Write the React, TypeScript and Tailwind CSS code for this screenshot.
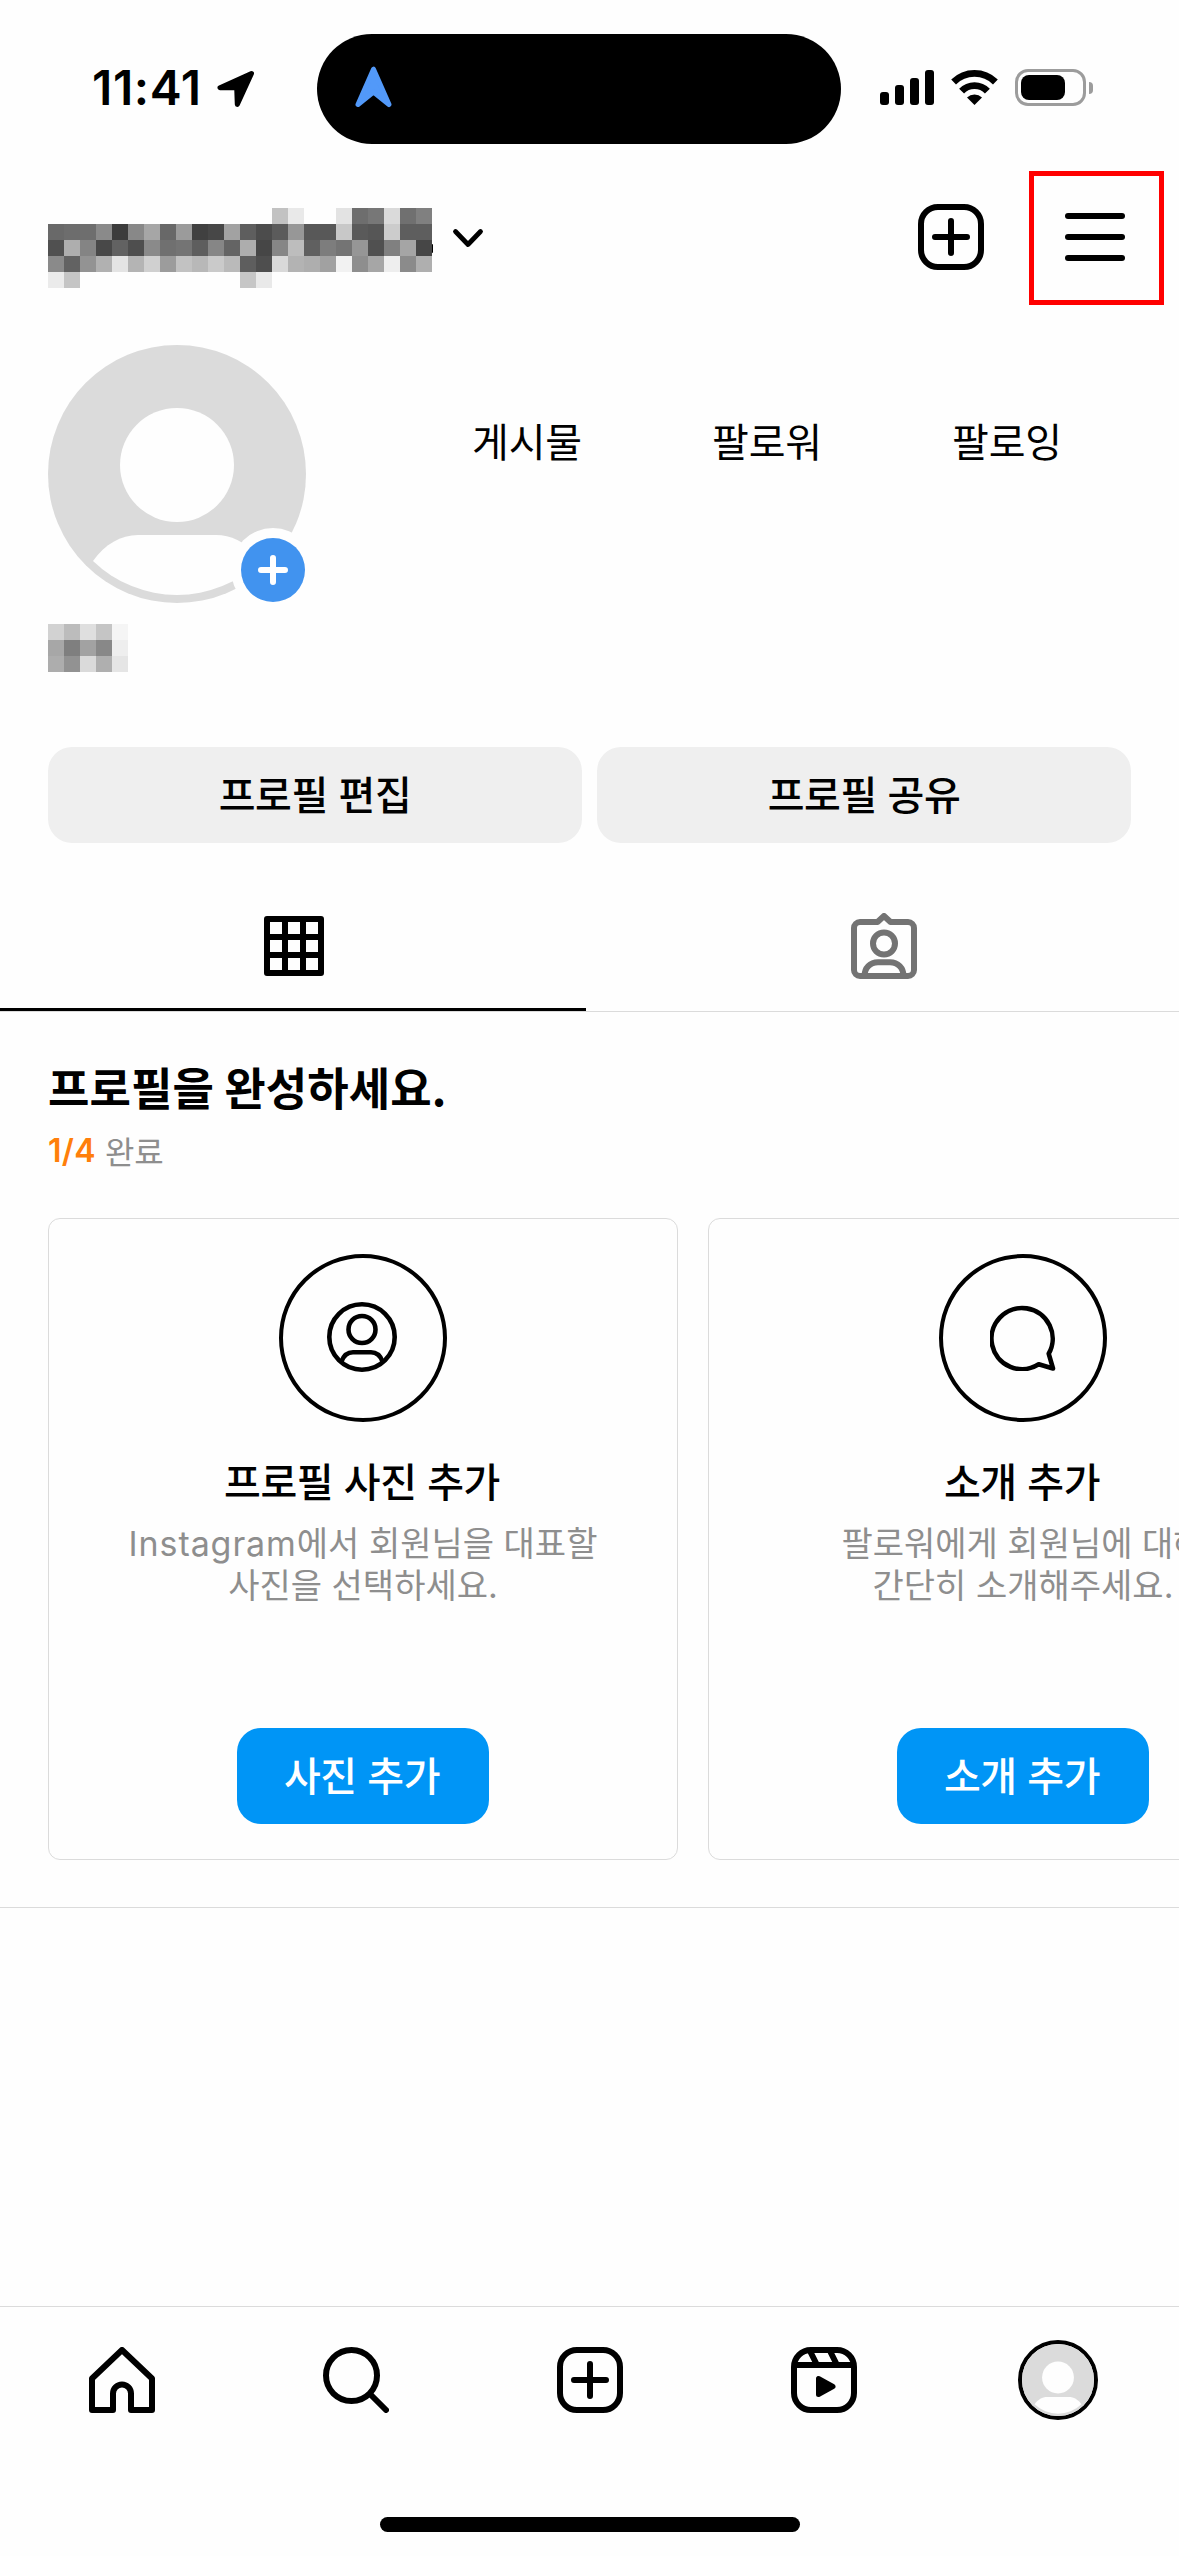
import type { ReactNode } from "react";

const USERNAME_MOSAIC = [
  ["", "", "", "", "", "", "", "", "", "", "", "", "", "", "#c2c2c2", "#e9e9e9", "", "", "#e3e3e3", "#6e6e6e", "#777777", "#dadada", "#707070", "#808080"],
  ["#696969", "#6d6d6d", "#6e6e6e", "#8a8a8a", "#3c3c3c", "#888888", "#a6a6a6", "#686868", "#9b9b9b", "#404040", "#474747", "#a2a2a2", "#5e5e5e", "#4c4c4c", "#5b5b5b", "#979797", "#585858", "#585858", "#c8c8c8", "#5a5a5a", "#565656", "#cccccc", "#5e5e5e", "#5e5e5e"],
  ["#505050", "#aeaeae", "#848484", "#484848", "#626262", "#4e4e4e", "#8a8a8a", "#707070", "#747474", "#5e5e5e", "#868686", "#646464", "#adadad", "#464646", "#868686", "#bdbdbd", "#606060", "#7d7d7d", "#747474", "#969696", "#505050", "#808080", "#a5a5a5", "#464646"],
  ["#8a8a8a", "#626262", "#939393", "#b1b1b1", "#e4e4e4", "#b4b4b4", "#d0d0d0", "#9c9c9c", "#c2c2c2", "#b8b8b8", "#cacaca", "#bababa", "#5e5e5e", "#4e4e4e", "#d9d9d9", "#b3b3b3", "#aeaeae", "#a1a1a1", "#f2f2f2", "#8e8e8e", "#a6a6a6", "#eeeeee", "#8b8b8b", "#afafaf"],
  ["#ebebeb", "#c5c5c5", "", "", "", "", "", "", "", "", "", "", "#c6c6c6", "#e9e9e9", "", "", "", "", "", "", "", "", "", ""],
];

const NAME_MOSAIC = [
  ["#d2d2d2", "#bcbcbc", "#dfdfdf", "#c5c5c5", "#f5f5f5"],
  ["#a7a7a7", "#7f7f7f", "#a2a2a2", "#888888", "#eeeeee"],
  ["#adadad", "#929292", "#dadada", "#afafaf", "#e5e5e5"],
];

const STATS = ["게시물", "팔로워", "팔로잉"];

type Card = {
  title: string;
  description: ReactNode;
  action: string;
  icon: ReactNode;
};

const CARDS: Card[] = [
  {
    title: "프로필 사진 추가",
    description: (
      <>
        <span className="tracking-[0.9px]">Instagram</span>에서 회원님을 대표할
        <br />
        사진을 선택하세요.
      </>
    ),
    action: "사진 추가",
    icon: <PersonIcon />,
  },
  {
    title: "소개 추가",
    description: (
      <>
        팔로워에게 회원님에 대해
        <br />
        간단히 소개해주세요.
      </>
    ),
    action: "소개 추가",
    icon: <BubbleIcon />,
  },
];

function Mosaic({ rows }: { rows: string[][] }) {
  return (
    <div className="flex flex-col">
      {rows.map((row, y) => (
        <div key={y} className="flex">
          {row.map((color, x) => (
            <div key={x} className="size-4" style={{ backgroundColor: color || "transparent" }} />
          ))}
        </div>
      ))}
    </div>
  );
}

function PersonIcon() {
  return (
    <svg viewBox="0 0 70 70" className="mr-[2px] mb-[2px] size-[70px]" fill="none" stroke="#000" strokeWidth="4.6">
      <circle cx="35" cy="35" r="32.7" />
      <circle cx="35" cy="27.5" r="13.5" />
      <path d="M14.5 59.5C16.5 54 20 50.3 26 50.3H44C50 50.3 53.5 54 55.5 59.5" />
    </svg>
  );
}

function BubbleIcon() {
  return (
    <svg viewBox="0 0 66 66" className="size-[66px]" fill="none" stroke="#000" strokeWidth="4.6" strokeLinejoin="round">
      <path d="M58.7 48.7A30.6 30.6 0 1 0 48.7 59.3L63 63.5Z" />
    </svg>
  );
}

function PlusSquareIcon() {
  return (
    <svg viewBox="0 0 66 66" className="size-[66px]" fill="none" stroke="#000" strokeWidth="6" strokeLinecap="round">
      <rect x="3" y="3" width="60" height="60" rx="17" />
      <path d="M33 17V49M17 33H49" />
    </svg>
  );
}

function HomeIcon() {
  return (
    <svg viewBox="0 0 66 66" className="size-[66px]" fill="none" stroke="#000" strokeWidth="6" strokeLinejoin="round">
      <path d="M3 63V31.5L33 3L63 31.5V63H42V46.5A9 9 0 0 0 24 46.5V63Z" />
    </svg>
  );
}

function SearchIcon() {
  return (
    <svg viewBox="0 0 66 66" className="size-[66px]" fill="none" stroke="#000" strokeWidth="6" strokeLinecap="round">
      <circle cx="28.5" cy="28.5" r="25.5" />
      <path d="M47.5 47.5L63 63" />
    </svg>
  );
}

function ReelsIcon() {
  return (
    <svg viewBox="0 0 66 66" className="size-[66px]" fill="none" stroke="#000" strokeWidth="6">
      <rect x="3" y="3" width="60" height="60" rx="17" />
      <path d="M3 18H63M18.5 3L26 18M38.5 3L46 18" />
      <path d="M27.5 31.5V47.5L42 39.5Z" fill="#000" strokeWidth="5" strokeLinejoin="round" />
    </svg>
  );
}

function GridIcon() {
  return (
    <svg viewBox="0 0 60 60" className="ml-[2px] size-[60px]" fill="none" stroke="#000" strokeWidth="6">
      <rect x="3" y="3" width="54" height="54" strokeLinejoin="round" />
      <path d="M21 3V57M39 3V57M3 21H57M3 39H57" />
    </svg>
  );
}

function TaggedIcon() {
  return (
    <svg viewBox="0 0 66 66" className="size-[66px]" fill="none" stroke="#737373" strokeWidth="6" strokeLinejoin="round">
      <path d="M26.5 9L33 3L39.5 9H57A6 6 0 0 1 63 15V57A6 6 0 0 1 57 63H9A6 6 0 0 1 3 57V15A6 6 0 0 1 9 9Z" />
      <circle cx="33" cy="30.5" r="11" />
      <path d="M13.5 63C13.5 55 19 49.3 27 49.3H39C47 49.3 52.5 55 52.5 63" />
    </svg>
  );
}

function Avatar({ className }: { className: string }) {
  return (
    <svg viewBox="0 0 258 258" className={className}>
      <circle cx="129" cy="129" r="129" fill="#dbdbdb" />
      <circle cx="129" cy="120" r="57" fill="#fefefe" />
      <path d="M45 216C57 199 73 190 90 190H168C185 190 201 199 213 216A121 121 0 0 1 45 216Z" fill="#fefefe" />
    </svg>
  );
}

function StatusBar() {
  return (
    <div className="flex h-[171px] shrink-0 items-start pt-[34px]">
      <div className="flex h-[110px] w-[317px] items-center pl-[92px]">
        <span className="w-[125px] pb-[3px] font-['Inter'] text-[48px] leading-none font-semibold tracking-[0.6px]">11:41</span>
        <svg viewBox="0 0 38 38" className="size-[38px]" stroke="#000" strokeWidth="5" strokeLinejoin="round">
          <path d="M34.5 3.5L3 17.8H19.7L20.3 34.5Z" />
        </svg>
      </div>
      <div className="flex h-[110px] w-[524px] items-center rounded-full bg-black pl-[38px]">
        <svg viewBox="0 0 37 42" className="mb-[4px] h-[42px] w-[37px]" fill="#5299f9" stroke="#5299f9" strokeWidth="5" strokeLinejoin="round">
          <path d="M18.5 3.2L3 38.5L18.5 26L34 38.5Z" />
        </svg>
      </div>
      <div className="flex h-[107px] items-center pl-[39px]">
        <div className="flex items-end gap-[6px]">
          <div className="h-[13px] w-[9px] rounded-[3px] bg-black" />
          <div className="h-[20px] w-[9px] rounded-[3px] bg-black" />
          <div className="h-[27px] w-[9px] rounded-[3px] bg-black" />
          <div className="h-[35px] w-[9px] rounded-[3px] bg-black" />
        </div>
        <svg viewBox="0 0 47 35" className="ml-[17px] h-[35px] w-[47px]" fill="none" stroke="#000" strokeWidth="6.8">
          <path d="M2.6 12A29.7 29.7 0 0 1 44.4 12" />
          <path d="M10.6 21.2A17.8 17.8 0 0 1 36.4 21.2" />
          <path d="M23.5 35L16 27.4A11 11 0 0 1 31 27.4Z" fill="#000" stroke="none" />
        </svg>
        <div className="ml-[17px] flex h-[37px] w-[71px] items-center rounded-[13px] border-3 border-[#9c9c9c] pl-[3px]">
          <div className="h-[25px] w-[44px] rounded-[8px] bg-black" />
        </div>
        <div className="ml-[3px] h-[12px] w-[4px] rounded-r-full bg-[#9c9c9c]" />
      </div>
    </div>
  );
}

function Header() {
  return (
    <div className="flex h-[134px] shrink-0 items-start pr-[15px] pl-12">
      <div className="flex items-center pt-[37px]">
        <Mosaic rows={USERNAME_MOSAIC} />
        <div className="h-[9px] w-[1px] rounded-r-full bg-black" />
      </div>
      <svg viewBox="0 0 32 22" className="mt-[56px] ml-[19px] h-[22px] w-[32px]" fill="none" stroke="#000" strokeWidth="4.8" strokeLinecap="round" strokeLinejoin="round">
        <path d="M3.5 4.5L16 17.5L28.5 4.5" />
      </svg>
      <button className="mt-[33px] ml-auto">
        <PlusSquareIcon />
      </button>
      <button className="ml-[45px] flex h-[134px] w-[135px] flex-col items-center gap-[15px] border-5 border-[#ff0000] pt-[37px] pr-[3px]">
        <span className="h-[6px] w-[60px] rounded-full bg-black" />
        <span className="h-[6px] w-[60px] rounded-full bg-black" />
        <span className="h-[6px] w-[60px] rounded-full bg-black" />
      </button>
    </div>
  );
}

function Profile() {
  return (
    <section className="flex h-[538px] shrink-0 flex-col px-12 pt-[40px]">
      <div className="flex">
        <div className="relative size-[258px]">
          <Avatar className="size-[258px]" />
          <div className="absolute -right-[9px] -bottom-[9px] flex size-[84px] items-center justify-center rounded-full bg-[#fefefe]">
            <div className="flex size-[64px] items-center justify-center rounded-full bg-[#4193ef]">
              <svg viewBox="0 0 30 30" className="size-[30px]" stroke="#fff" strokeWidth="6" strokeLinecap="round">
                <path d="M15 3V27M3 15H27" />
              </svg>
            </div>
          </div>
        </div>
        <div className="ml-[101px] flex pt-[75px]">
          {STATS.map((label) => (
            <span key={label} className="w-[240px] text-center text-[40px] leading-[40px] tracking-[-0.2px]">
              {label}
            </span>
          ))}
        </div>
      </div>
      <div className="mt-[21px]">
        <Mosaic rows={NAME_MOSAIC} />
      </div>
      <div className="mt-[75px] grid h-24 grid-cols-[534px_534px] gap-[15px]">
        <button className="rounded-[24px] bg-[#efefef] pb-[4px] text-[40px] leading-none font-medium tracking-[-0.4px] [word-spacing:2px]">프로필 편집</button>
        <button className="rounded-[24px] bg-[#efefef] pb-[4px] text-[40px] leading-none font-medium tracking-[-0.4px] [word-spacing:2px]">프로필 공유</button>
      </div>
    </section>
  );
}

function Tabs() {
  return (
    <div className="flex h-[169px] shrink-0">
      <div className="flex w-[586px] flex-col items-center justify-between pt-[73px]">
        <GridIcon />
        <div className="h-1 w-full border-b border-[#dbdbdb] bg-black" />
      </div>
      <div className="flex flex-1 justify-center border-b border-[#dbdbdb] pt-[70px] pl-[3px]">
        <TaggedIcon />
      </div>
    </div>
  );
}

function SetupCard({ card }: { card: Card }) {
  return (
    <article className="flex h-[642px] w-[630px] shrink-0 flex-col items-center rounded-[12px] border border-[#dbdbdb] pt-[35px]">
      <div className="flex size-[168px] items-center justify-center rounded-full border-[4.5px] border-black">{card.icon}</div>
      <h3 className="mt-[34px] mr-[2px] text-[40px] leading-[48px] font-medium tracking-[-0.4px] [word-spacing:2px]">{card.title}</h3>
      <p className="mt-[19px] text-center font-['Inter','Noto_Sans_CJK_KR',sans-serif] text-[34px] leading-[42px] whitespace-nowrap text-[#8e8e8e]">
        {card.description}
      </p>
      <button className="mt-auto mb-[35px] h-24 w-[252px] rounded-[24px] bg-[#0095f6] pr-[2px] pb-[4px] text-[40px] leading-none font-medium tracking-[-0.4px] text-white [word-spacing:2px]">
        {card.action}
      </button>
    </article>
  );
}

function SetupSection() {
  return (
    <section className="flex h-[896px] shrink-0 flex-col border-b border-[#dbdbdb] pt-[48px] pl-12">
      <h2 className="text-[45px] leading-[54px] font-bold tracking-[0.1px]">프로필을 완성하세요.</h2>
      <p className="mt-[16px] flex h-[40px] items-center gap-[9px] text-[32px] leading-[40px] text-[#8e8e8e]">
        <span className="pt-[2px] font-['Inter'] font-semibold tracking-[0.3px] text-[#ff7f0a]">1/4</span>
        <span>완료</span>
      </p>
      <div className="mt-[48px] flex gap-[30px] overflow-hidden">
        {CARDS.map((card) => (
          <SetupCard key={card.title} card={card} />
        ))}
      </div>
    </section>
  );
}

function BottomNav() {
  return (
    <nav className="mt-auto flex h-[250px] shrink-0 flex-col items-center justify-between border-t border-[#dbdbdb] pb-6">
      <div className="grid w-full grid-cols-5 items-center justify-items-center pt-[33px] pr-[4px] pl-[5px]">
        <HomeIcon />
        <SearchIcon />
        <PlusSquareIcon />
        <ReelsIcon />
        <div className="flex size-20 items-center justify-center rounded-full border-4 border-black">
          <Avatar className="size-[72px]" />
        </div>
      </div>
      <div className="h-[15px] w-[420px] rounded-full bg-black" />
    </nav>
  );
}

export default function App() {
  return (
    <div className="flex h-[2556px] w-[1179px] flex-col overflow-hidden bg-[#fefefe] font-['Noto_Sans_CJK_KR',sans-serif] text-black">
      <StatusBar />
      <Header />
      <Profile />
      <Tabs />
      <SetupSection />
      <BottomNav />
    </div>
  );
}
